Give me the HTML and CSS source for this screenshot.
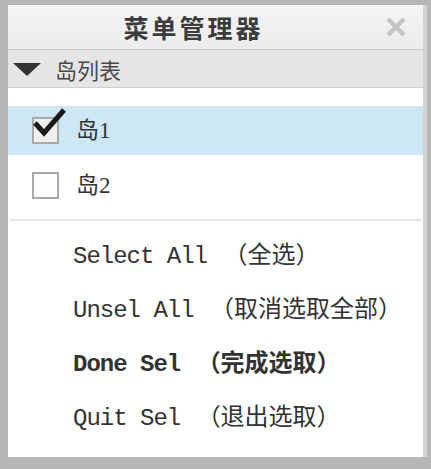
FILE: index.html
```html
<!DOCTYPE html>
<html lang="zh">
<head>
<meta charset="utf-8">
<title>菜单管理器</title>
<link rel="stylesheet" href="styles.css">
</head>
<body>
<div class="panel">
  <div class="titlebar">
    <h1 class="title">菜单管理器</h1>
    <span class="close" aria-label="close">
      <svg width="22" height="22" viewBox="0 0 22 22"><path d="M3 3 L19 19 M19 3 L3 19" stroke="#c4c4c4" stroke-width="4.5" stroke-linecap="butt"/></svg>
    </span>
  </div>
  <div class="section">
    <span class="tri"></span>
    <span class="section-label">岛列表</span>
  </div>
  <div class="body">
    <div class="list">
      <div class="row selected">
        <span class="box">
          <svg class="check" width="36" height="32" viewBox="0 0 36 32"><path d="M3 16 L12 26 L32 3" fill="none" stroke="#1a1a1a" stroke-width="5" stroke-linejoin="miter"/></svg>
        </span>
        <span class="label">岛1</span>
      </div>
      <div class="row">
        <span class="box"></span>
        <span class="label">岛2</span>
      </div>
    </div>
    <div class="sep"></div>
    <ul class="menu">
      <li>Select All <span class="cjk">（全选）</span></li>
      <li>Unsel All <span class="cjk">（取消选取全部）</span></li>
      <li class="bold">Done Sel <span class="cjk">（完成选取）</span></li>
      <li>Quit Sel <span class="cjk">（退出选取）</span></li>
    </ul>
  </div>
</div>
</body>
</html>
```
FILE: styles.css
```css
html, body {
  margin: 0;
  padding: 0;
}
body {
  background: #b7b7b7;
  width: 431px;
  height: 469px;
  box-sizing: border-box;
  padding: 5px 4px 12px 8px;
  overflow: hidden;
}
.panel {
  height: 452px;
  display: flex;
  flex-direction: column;
  border-right: 4px solid #d4d4d4;
  background: #fff;
}
.titlebar {
  height: 45px;
  display: flex;
  align-items: center;
  background: linear-gradient(#f4f4f4, #ececec);
  border-bottom: 1px solid #c9c9c9;
  box-sizing: border-box;
}
.title {
  flex: 1;
  margin: 0;
  padding-right: 6px;
  text-align: center;
  font-family: "Noto Sans CJK SC", sans-serif;
  font-weight: 700;
  font-size: 25px;
  letter-spacing: 3px;
  color: #3b3b3b;
  line-height: 45px;
}
.close {
  width: 22px;
  height: 22px;
  margin-right: 16px;
  display: flex;
}
.section {
  height: 38px;
  box-sizing: border-box;
  display: flex;
  align-items: center;
  background: #e6e6e6;
  border-bottom: 1px solid #cfcfcf;
  padding-left: 5px;
}
.tri {
  width: 0;
  height: 0;
  border-left: 14px solid transparent;
  border-right: 14px solid transparent;
  border-top: 13px solid #333;
  margin-top: 2px;
}
.section-label {
  margin-left: 14px;
  font-family: "Noto Sans CJK SC", sans-serif;
  font-size: 22px;
  color: #4a4a4a;
  line-height: 1;
}
.body {
  flex: 1;
  background: #fff;
  display: flex;
  flex-direction: column;
}
.list {
  padding: 18px 0 9px;
  display: flex;
  flex-direction: column;
  gap: 6px;
}
.row {
  height: 49px;
  display: flex;
  align-items: center;
  padding-left: 24px;
}
.row.selected {
  background: #cde7f5;
}
.box {
  position: relative;
  width: 27px;
  height: 27px;
  box-sizing: border-box;
  border: 2px solid #a9a9a9;
  background: #fdfdfd;
}
.selected .box {
  background: #eeeeee;
}
.check {
  position: absolute;
  left: -2px;
  top: -12px;
}
.label {
  margin-left: 17px;
  font-family: "Liberation Serif", "Noto Sans CJK SC", serif;
  font-size: 23px;
  color: #333;
  line-height: 1;
}
.sep {
  height: 2px;
  background: #e6e6e6;
  margin: 0 2px;
}
.menu {
  list-style: none;
  margin: 0;
  padding: 5px 0 0 65px;
}
.menu li {
  height: 54px;
  line-height: 54px;
  font-family: "Liberation Mono", "Noto Sans CJK SC", monospace;
  font-size: 24px;
  letter-spacing: -1px;
  color: #333;
  white-space: pre;
}
.menu li.bold {
  font-weight: 700;
}
.cjk {
  font-family: "Noto Sans CJK SC", sans-serif;
  font-size: 24px;
  letter-spacing: 0;
  margin-left: 3px;
}
```
